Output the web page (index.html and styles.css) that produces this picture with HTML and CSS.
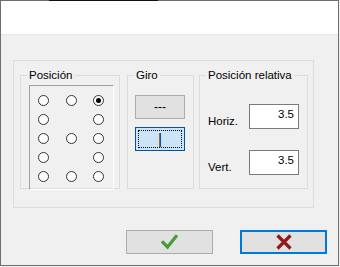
FILE: index.html
```html
<!DOCTYPE html>
<html>
<head>
  <meta charset="UTF-8">
  <title>Posición</title>
  <link rel="stylesheet" href="styles.css">
</head>
<body>
  <div class="window">
    <span class="topbar"></span>
    <div class="header"></div>
    <div class="content">
      <div class="frame">
        <fieldset class="group group-pos">
          <legend>Posición</legend>
          <div class="group-body">
            <div class="sunken">
              <span class="radio"></span><span class="radio"></span><span class="radio checked"></span>
              <span class="radio"></span><span class="empty"></span><span class="radio"></span>
              <span class="radio"></span><span class="radio"></span><span class="radio"></span>
              <span class="radio"></span><span class="empty"></span><span class="radio"></span>
              <span class="radio"></span><span class="radio"></span><span class="radio"></span>
            </div>
          </div>
        </fieldset>

        <fieldset class="group group-giro">
          <legend>Giro</legend>
          <div class="group-body">
            <button class="btn">---</button>
            <button class="btn btn-active"><span class="focus">|</span></button>
          </div>
        </fieldset>

        <fieldset class="group group-rel">
          <legend>Posición relativa</legend>
          <div class="group-body">
            <div class="field">
              <label>Horiz.</label>
              <input class="num" value="3.5">
            </div>
            <div class="field">
              <label>Vert.</label>
              <input class="num" value="3.5">
            </div>
          </div>
        </fieldset>
      </div>

      <div class="actions">
        <button class="btn btn-big">
          <svg width="17" height="16" viewBox="0 0 17 16">
            <path d="M2 8.5 L6.5 13 L15 2.5" fill="none" stroke="#4b9a3b" stroke-width="3.2" stroke-linecap="square"/>
          </svg>
        </button>
        <button class="btn btn-big btn-default">
          <svg width="18" height="16" viewBox="0 0 18 16">
            <path d="M2.5 1.5 L15.5 14.5 M15.5 1.5 L2.5 14.5" fill="none" stroke="#8e1b1b" stroke-width="3.2"/>
          </svg>
        </button>
      </div>
    </div>
  </div>
</body>
</html>
```

FILE: styles.css
```css
body {
  margin: 0;
  background-color: #f0f0f0;
  font-family: "Liberation Sans", Arial, sans-serif;
  font-size: 11.5px;
  color: #000;
}

.window {
  position: relative;
  width: 337px;
  height: 264px;
  border: 1px solid #6e6e6e;
  background-color: #f0f0f0;
}

.topbar {
  position: absolute;
  top: -1px;
  left: 48px;
  width: 109px;
  height: 1px;
  background-color: #111;
}

.header {
  height: 33px;
  background-color: #fff;
  border-bottom: 1px solid #e6e6e6;
}

.content {
  padding: 25px 0 0 12px;
}

.frame {
  display: flex;
  width: 288px;
  height: 146px;
  border: 1px solid #dcdcdc;
  padding: 0 5px 0 6px;
}

.group {
  margin: 7px 0 0 0;
  padding: 0;
  min-width: 0;
  border: 1px solid #dcdcdc;
  height: 121px;
  box-sizing: border-box;
}

.group legend {
  padding: 0 2px;
  margin-left: 6px;
  line-height: 14px;
}

.group-pos {
  width: 100px;
}

.group-pos .group-body {
  padding: 3px 0 0 8px;
}

.group-giro {
  width: 67px;
  margin-left: 7px;
}

.group-giro .group-body {
  padding: 13px 0 0 7px;
}

.group-rel {
  width: 109px;
  margin-left: 5px;
}

.group-rel .group-body {
  padding: 22px 0 0 8px;
}

.sunken {
  width: 85px;
  height: 105px;
  box-sizing: border-box;
  border-top: 1px solid #a0a0a0;
  border-left: 1px solid #a0a0a0;
  border-right: 1px solid #fff;
  border-bottom: 1px solid #fff;
  padding: 9px 0 0 8px;
  display: grid;
  grid-template-columns: repeat(3, 11px);
  grid-auto-rows: 11px;
  column-gap: 16.5px;
  row-gap: 8px;
}

.radio {
  width: 11px;
  height: 11px;
  box-sizing: border-box;
  border: 1px solid #333;
  border-radius: 50%;
  background-color: #fff;
  display: flex;
  align-items: center;
  justify-content: center;
}

.checked::after {
  content: "";
  width: 5px;
  height: 5px;
  border-radius: 50%;
  background-color: #000;
}

.btn {
  display: flex;
  align-items: center;
  justify-content: center;
  width: 50px;
  height: 24px;
  padding: 0;
  margin: 0;
  border: 1px solid #adadad;
  background-color: #e1e1e1;
  font-family: inherit;
  font-size: 12px;
  color: #000;
}

.group-giro .btn-active {
  margin-top: 8px;
  background-color: #cce4f7;
  border-color: #005499;
  padding: 2px;
  font-size: 14px;
}

.focus {
  width: 100%;
  height: 100%;
  box-sizing: border-box;
  border: 1px dotted #000;
  display: flex;
  align-items: center;
  justify-content: center;
}

.field {
  display: flex;
  align-items: center;
  justify-content: space-between;
  width: 91px;
  height: 25px;
  margin-bottom: 21px;
}

.field label {
  padding-top: 8px;
}

.num {
  width: 50px;
  height: 25px;
  box-sizing: border-box;
  border: 1px solid #7a7a7a;
  padding: 0 4px 6px 0;
  text-align: right;
  font-family: inherit;
  font-size: 11.5px;
  background-color: #fff;
}

.actions {
  display: flex;
  justify-content: flex-end;
  gap: 27px;
  margin-top: 22px;
  padding-right: 11px;
}

.btn-big {
  width: 87px;
  height: 24px;
}

.btn-default {
  border: 2px solid #0078d7;
}
```
